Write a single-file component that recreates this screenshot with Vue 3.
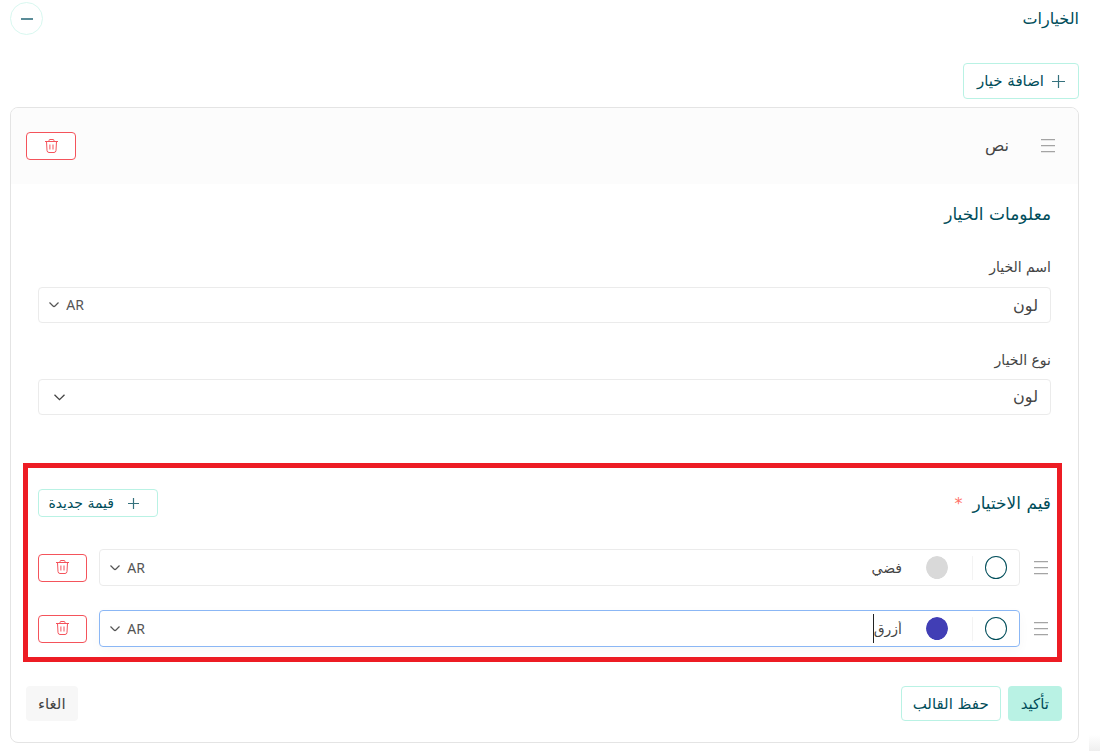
<script setup>
import { ref } from 'vue'

const optionName = ref('لون')
const optionType = ref('لون')
const optionLang = ref('AR')
const picked = ref(null)
const values = ref([
  { id: 1, name: 'فضي', color: '#d9d9d9', lang: 'AR', active: false },
  { id: 2, name: 'أزرق', color: '#413eb5', lang: 'AR', active: true },
])
const removeValue = (id) => {
  values.value = values.value.filter((v) => v.id !== id)
}
const addValue = () => {
  values.value.push({ id: Date.now(), name: '', color: '#d9d9d9', lang: 'AR', active: false })
}
</script>

<template>
  <main class="page" dir="rtl">
    <header class="top">
      <h2 class="title main-title">الخيارات</h2>
      <button class="collapse" type="button" aria-label="طي">
        <svg width="12" height="2" viewBox="0 0 12 2"><path d="M0 1H12" stroke="#5a8c98" stroke-width="2" /></svg>
      </button>
    </header>

    <button class="btn outline add" type="button">
      <svg width="13" height="13" viewBox="0 0 13 13"><path d="M6.5 0V13M0 6.5H13" stroke="#35717d" stroke-width="1.2" /></svg>
      <span>اضافة خيار</span>
    </button>

    <section class="card">
      <div class="card-head">
        <svg class="grip" width="14" height="14" viewBox="0 0 14 14"><path d="M0 .6H14M0 6.6H14M0 12.6H14" stroke="#a4a4a4" stroke-width="1.2" /></svg>
        <span class="kind">نص</span>
        <button class="trash wide" type="button" aria-label="حذف الخيار">
          <svg width="13" height="15" viewBox="0 0 13 15" fill="none" stroke="#f4535b"><path d="M0 2.500H13M4 2.500V1.500Q4 .5 5 .5H8Q9 .5 9 1.500V2.500M1.500 2.500L2 11.500Q2.200 13.500 4 13.500H9Q10.800 13.500 11 11.500L11.500 2.500M4.900 5.500V10.500M8 5.500V10.500" /></svg>
        </button>
      </div>

      <div class="info">
        <h3 class="title">معلومات الخيار</h3>
        <label class="label" for="opt-name">اسم الخيار</label>
        <div class="field">
          <input id="opt-name" v-model="optionName" class="text" type="text" />
          <span class="lang">
            <select v-model="optionLang" aria-label="لغة الاسم"><option>AR</option></select>
            <svg width="10" height="6" viewBox="0 0 10 6"><path d="M.5 .5L4 4Q5 5 6 4L9.500 .5" fill="none" stroke="#555" stroke-width="1.2" /></svg>
          </span>
        </div>
        <label class="label second" for="opt-type">نوع الخيار</label>
        <div class="field type">
          <select id="opt-type" v-model="optionType" class="text"><option>لون</option></select>
          <svg width="11" height="7" viewBox="0 0 11 7"><path d="M.5 .7L5.500 5.700L10.500 .7" fill="none" stroke="#444" stroke-width="1.3" /></svg>
        </div>
      </div>

      <div class="values">
        <div class="values-head">
          <h3 class="title">قيم الاختيار<span class="star">*</span></h3>
          <button class="btn outline new" type="button" @click="addValue">
            <svg width="11" height="11" viewBox="0 0 11 11"><path d="M5.500 0V11M0 5.500H11" stroke="#35717d" stroke-width="1.2" /></svg>
            <span>قيمة جديدة</span>
          </button>
        </div>
        <div v-for="v in values" :key="v.id" class="row">
          <svg class="grip" width="14" height="14" viewBox="0 0 14 14"><path d="M0 .6H14M0 6.6H14M0 12.6H14" stroke="#a4a4a4" stroke-width="1.2" /></svg>
          <div class="field value" :class="{ active: v.active }">
            <input v-model="picked" class="radio" type="radio" name="default-value" :value="v.id" aria-label="القيمة الافتراضية" />
            <span class="divider"></span>
            <input v-model="v.color" class="swatch" type="color" aria-label="اللون" />
            <input v-model="v.name" class="text" :class="{ fit: v.active }" type="text" aria-label="اسم القيمة" />
            <span v-if="v.active" class="caret"></span>
            <span class="lang">
              <select v-model="v.lang" aria-label="لغة القيمة"><option>AR</option></select>
              <svg width="10" height="6" viewBox="0 0 10 6"><path d="M.5 .5L4 4Q5 5 6 4L9.500 .5" fill="none" stroke="#555" stroke-width="1.2" /></svg>
            </span>
          </div>
          <button class="trash" type="button" aria-label="حذف القيمة" @click="removeValue(v.id)">
            <svg width="13" height="15" viewBox="0 0 13 15" fill="none" stroke="#f4535b"><path d="M0 2.500H13M4 2.500V1.500Q4 .5 5 .5H8Q9 .5 9 1.500V2.500M1.500 2.500L2 11.500Q2.200 13.500 4 13.500H9Q10.800 13.500 11 11.500L11.500 2.500M4.900 5.500V10.500M8 5.500V10.500" /></svg>
          </button>
        </div>
      </div>

      <footer class="actions">
        <button class="btn confirm" type="button">تأكيد</button>
        <button class="btn outline" type="button">حفظ القالب</button>
        <button class="btn cancel" type="button">الغاء</button>
      </footer>
    </section>
    <span class="corner"></span>
  </main>
</template>

<style>
body {
  background: #fff;
}
</style>

<style scoped>
* {
  box-sizing: border-box;
}
.page {
  position: relative;
  padding: 2px 21px 8px 10px;
  font-family: "DejaVu Sans", sans-serif;
  font-size: 14px;
  line-height: 20px;
  color: #444;
}
svg {
  display: block;
  flex: none;
}
button,
input,
select {
  font: inherit;
  color: inherit;
  margin: 0;
  padding: 0;
}
.top {
  display: flex;
  justify-content: space-between;
  align-items: center;
  height: 33px;
}
.title {
  margin: 0;
  font-size: 17px;
  line-height: 24px;
  font-weight: 400;
  color: #004d5a;
}
.main-title {
  font-size: 16px;
}
.collapse {
  display: flex;
  align-items: center;
  justify-content: center;
  width: 33px;
  height: 33px;
  border: 1px solid #d8f8f0;
  border-radius: 50%;
  background: #fff;
}
.btn {
  display: flex;
  align-items: center;
  justify-content: center;
  height: 35px;
  padding: 0 11px;
  border: 1px solid transparent;
  border-radius: 4px;
  font-size: 15px;
  color: #004d5a;
}
.outline {
  border-color: #b9f2e4;
  background: #fff;
}
.add {
  width: 116px;
  height: 36px;
  margin-top: 28px;
  gap: 8px;
}
.card {
  margin-top: 8px;
  border: 1px solid #e4e4e4;
  border-radius: 8px;
  overflow: hidden;
}
.card-head {
  display: flex;
  align-items: center;
  height: 76px;
  padding: 0 23px 0 15px;
  background: #fcfcfc;
}
.kind {
  margin-right: 32px;
  font-size: 16px;
}
.trash {
  display: flex;
  justify-content: center;
  align-items: center;
  flex: none;
  width: 49px;
  height: 28px;
  border: 1px solid #f4535b;
  border-radius: 4px;
  background: #fff;
}
.wide {
  width: 50px;
  margin-right: auto;
}
.info {
  padding: 18px 27px 0;
}
.label {
  display: block;
  width: max-content;
  margin: 31px 0 10px;
}
.second {
  margin: 27px 0 9px;
}
.field {
  display: flex;
  align-items: center;
  height: 36px;
  padding: 0 12px 0 10px;
  border: 1px solid #ebebeb;
  border-radius: 4px;
  background: #fff;
}
.type {
  padding-left: 15px;
}
.text {
  flex: 1;
  min-width: 0;
  height: 30px;
  border: 0;
  outline: 0;
  background: none;
  font-size: 16px;
  appearance: none;
}
.lang {
  display: flex;
  align-items: center;
  gap: 7px;
  margin-right: auto;
  font-family: "Noto Sans", sans-serif;
}
.lang select {
  width: 18px;
  border: 0;
  background: none;
  appearance: none;
  color: #555;
}
.values {
  margin: 48px 16px 0 12px;
  padding: 21px 6px 10px 10px;
  border: 5px solid #ed1c24;
}
.values-head {
  display: flex;
  justify-content: space-between;
  align-items: center;
  margin-bottom: 32px;
}
.star {
  margin-right: 10px;
  font-size: 16px;
  color: #ff7168;
}
.new {
  justify-content: flex-start;
  width: 120px;
  height: 28px;
  padding: 0 18px 0 7px;
  gap: 14px;
  font-size: 14px;
  white-space: nowrap;
}
.row {
  display: flex;
  align-items: center;
  gap: 12px;
  padding-right: 3px;
}
.row + .row {
  margin-top: 24px;
}
.value {
  flex: 1;
  height: 37px;
  margin-right: 2px;
}
.value .text {
  font-size: 14px;
}
.active {
  border-color: #8bb7f5;
  box-shadow: 0 4px 12px rgba(0, 0, 0, 0.03);
}
.radio {
  flex: none;
  width: 22px;
  height: 23px;
  border: 1px solid #004d5a;
  border-radius: 50%;
  appearance: none;
}
.radio:checked {
  background: #b9f2e4;
}
.divider {
  width: 1px;
  height: 24px;
  margin: 0 12px 0 24px;
  background: #f3f3f3;
}
.swatch {
  flex: none;
  width: 22px;
  height: 23px;
  margin-left: 24px;
  border: 0;
  border-radius: 50%;
  overflow: hidden;
  appearance: none;
  background: none;
}
.swatch::-webkit-color-swatch-wrapper {
  padding: 0;
}
.swatch::-webkit-color-swatch {
  border: 0;
  border-radius: 50%;
}
.fit {
  flex: none;
  field-sizing: content;
}
.caret {
  width: 1px;
  height: 29px;
  background: #222;
}
.actions {
  display: flex;
  gap: 7px;
  padding: 24px 16px 21px 15px;
}
.confirm {
  padding: 0 12px;
  background: #b9f2e4;
}
.cancel {
  margin-right: auto;
  background: #f7f7f7;
  color: #444;
}
.corner {
  position: absolute;
  right: 0;
  bottom: 0;
  width: 11px;
  height: 16px;
  background: linear-gradient(#fff, #efefef);
}
</style>
